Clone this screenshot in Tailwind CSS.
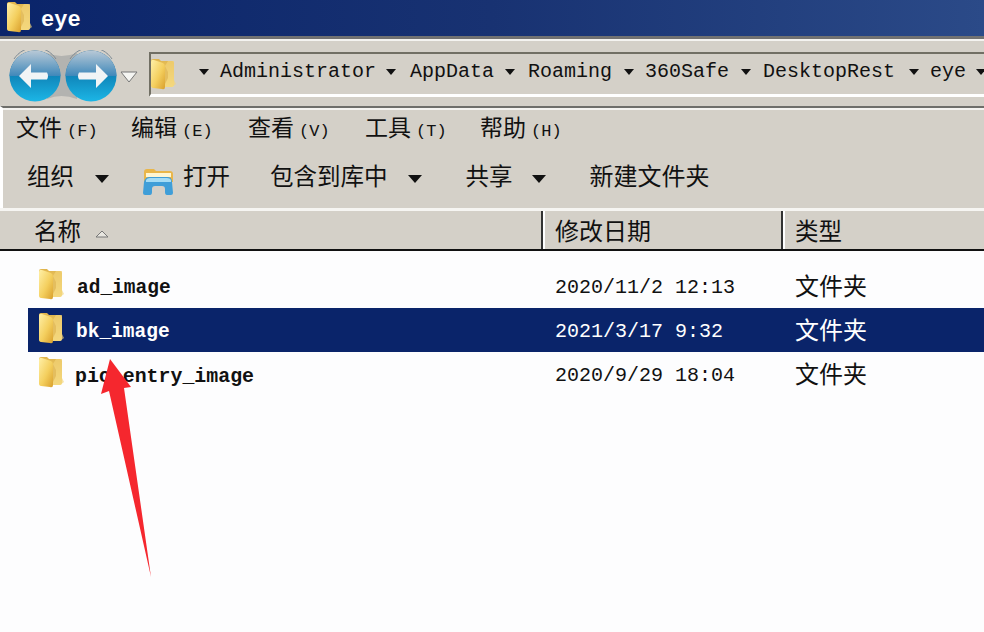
<!DOCTYPE html>
<html lang="en">

<head>
    <meta charset="UTF-8">
    <title>eye</title>
    <script src="https://cdn.jsdelivr.net/npm/@tailwindcss/browser@4"></script>
</head>

<body class="relative w-[984px] h-[632px] overflow-hidden bg-[#fdfdfe] text-[#111] font-['Liberation_Mono','Noto_Sans_CJK_SC',monospace]">
    <svg class="absolute w-0 h-0">
        <defs>
            <linearGradient id="folderFront" x1="0" y1="0" x2="1" y2="1">
                <stop offset="0" stop-color="#fff0a8" />
                <stop offset="0.55" stop-color="#f4cf5e" />
                <stop offset="1" stop-color="#d99f2c" />
            </linearGradient>
            <linearGradient id="folderBack" x1="0" y1="0" x2="0" y2="1">
                <stop offset="0" stop-color="#e0b44c" />
                <stop offset="1" stop-color="#f6df86" />
            </linearGradient>
            <linearGradient id="btnBottom" x1="0" y1="0" x2="0" y2="1">
                <stop offset="0" stop-color="#04568e" />
                <stop offset="1" stop-color="#1cb6e6" />
            </linearGradient>
            <linearGradient id="btnTop" x1="0" y1="0" x2="0" y2="1">
                <stop offset="0" stop-color="#b9c9d6" />
                <stop offset="1" stop-color="#3f88ba" />
            </linearGradient>
            <symbol id="folder" viewBox="0 0 26 32">
                <path d="M1 3 Q1 1 3 1 H9 L11 3 H22 Q24 3 24 5 V27 Q24 29 22 29 H3 Q1 29 1 27 Z" fill="url(#folderBack)" />
                <path d="M1 4 Q1 1 4 2 L13 5 Q15 6 15 9 V29 Q15 32 12 31 L3 30 Q1 30 1 27 Z" fill="url(#folderFront)" />
                <path d="M15 8 L18 14 V20 L15 26 Z" fill="#c9962f" />
                <path d="M18 3 H24 V22 L26 26 L22 29 H15 V8 Z" fill="#f3d479" opacity="0.65" />
            </symbol>
            <symbol id="navBtn" viewBox="0 0 52 52">
                <circle cx="26" cy="26" r="25.5" fill="url(#btnBottom)" />
                <path d="M0.5 26 A25.5 25.5 0 0 1 51.5 26 Z" fill="url(#btnTop)" />
                <path d="M5 9 A25 25 0 0 1 47 9" fill="none" stroke="#7d8a94" stroke-width="1" />
            </symbol>
        </defs>
    </svg>

    <!-- title bar -->
    <header class="h-[36px] flex items-center pl-[6px] gap-[9px] bg-gradient-to-r from-[#0a246a] via-[#183272] to-[#2b4a88]">
        <svg class="w-[26px] h-[32px] -mt-[2px]"><use href="#folder" /></svg>
        <span class="text-white font-bold text-[22px] leading-none mt-[6px]">eye</span>
    </header>

    <!-- address bar -->
    <div class="h-[70px] border-t-[3px] border-[#727272] bg-[#d4d0c8] shadow-[inset_0_2px_0_#f4f3f0] flex pl-[9px]">
        <div class="flex items-center gap-[4px] w-[140px] mt-[7px] shrink-0">
            <svg class="w-[52px] h-[52px] overflow-visible" viewBox="0 0 52 52">
                <path d="M38 3 Q52 9 68 3 V49 Q52 43 38 49 Z" fill="#b3b3b0" />
                <use href="#navBtn" width="52" height="52" />
                <path d="M10 26 L22 14 V22.5 H38 Q40 26 38 29.5 H22 V38 Z" fill="#f1f4f6" />
            </svg>
            <svg class="w-[52px] h-[52px]" viewBox="0 0 52 52">
                <use href="#navBtn" width="52" height="52" />
                <path d="M43 26 L31 14 V22.5 H14 Q12 26 14 29.5 H31 V38 Z" fill="#f1f4f6" />
            </svg>
            <svg class="w-[18px] h-[12px] -ml-[1px] mt-[2px]" viewBox="0 0 18 12">
                <path d="M1 1 H17 L9 11 Z" fill="#f5f5f2" stroke="#777" stroke-width="1" />
            </svg>
        </div>
        <div class="mt-[13px] h-[45px] flex-1 border-t-2 border-l-2 border-[#716f64] border-b-[3px] border-b-white flex items-center overflow-hidden min-w-0">
            <svg class="w-[26px] h-[32px] -ml-[1px] shrink-0"><use href="#folder" /></svg>
            <div class="-mt-[4px] flex items-center text-[20px] leading-none whitespace-nowrap ml-[23px]">
                <span class="w-0 h-0 border-x-[5px] border-x-transparent border-t-[6px] border-t-[#111] mr-[11px]"></span>
                <span>Administrator</span>
                <span class="w-0 h-0 border-x-[5px] border-x-transparent border-t-[6px] border-t-[#111] ml-[10px] mr-[14px]"></span>
                <span>AppData</span>
                <span class="w-0 h-0 border-x-[5px] border-x-transparent border-t-[6px] border-t-[#111] ml-[11px] mr-[13px]"></span>
                <span>Roaming</span>
                <span class="w-0 h-0 border-x-[5px] border-x-transparent border-t-[6px] border-t-[#111] ml-[12px] mr-[11px]"></span>
                <span>360Safe</span>
                <span class="w-0 h-0 border-x-[5px] border-x-transparent border-t-[6px] border-t-[#111] ml-[12px] mr-[12px]"></span>
                <span>DesktopRest</span>
                <span class="w-0 h-0 border-x-[5px] border-x-transparent border-t-[6px] border-t-[#111] ml-[14px] mr-[11px]"></span>
                <span>eye</span>
                <span class="w-0 h-0 border-x-[5px] border-x-transparent border-t-[6px] border-t-[#111] ml-[10px]"></span>
            </div>
        </div>
    </div>

    <!-- menu and command bar -->
    <div class="h-[102px] border-t-2 border-[#6e6e6a] border-l-[3px] border-l-white bg-[#d4d0c8] shadow-[inset_0_2px_0_#f4f3f0]">
        <nav class="h-[40px] pt-[5px] pl-[13px] flex items-center gap-[33px] text-[23px] whitespace-nowrap">
            <span class="flex items-baseline w-[82px]">文件<span class="text-[17px] ml-[5px]">(F)</span></span>
            <span class="flex items-baseline w-[84px]">编辑<span class="text-[17px] ml-[5px]">(E)</span></span>
            <span class="flex items-baseline w-[84px]">查看<span class="text-[17px] ml-[5px]">(V)</span></span>
            <span class="flex items-baseline w-[82px]">工具<span class="text-[17px] ml-[5px]">(T)</span></span>
            <span class="flex items-baseline w-[84px]">帮助<span class="text-[17px] ml-[5px]">(H)</span></span>
        </nav>
        <div class="h-[58px] pl-[24px] pt-[4px] flex items-center text-[23.5px] whitespace-nowrap">
            <span>组织</span>
            <span class="w-0 h-0 border-x-[7px] border-x-transparent border-t-[8px] border-t-[#111] ml-[21px]"></span>
            <svg class="w-[32px] h-[28px] ml-[33px] mt-[3px]" viewBox="0 0 32 28">
                <path d="M2 15 V5 Q2 2 5 2 H12 L14 4 H28 Q31 4 31 7 V15 Z" fill="#e9b64a" />
                <path d="M4 6 H29 V10 H4 Z" fill="#fff6d2" />
                <path d="M1 26 L2 15 Q3 10 8 10 H25 Q30 10 30 15 L31 26 Q31 28 29 28 H25 Q23 28 23 25 V22 Q23 19 20 19 H13 Q10 19 10 22 V25 Q10 28 8 28 H3 Q1 28 1 26 Z" fill="#3f9ed8" />
                <path d="M4 13 Q5 11 8 11 H25 Q28 11 29 13 V15 H4 Z" fill="#a4dcf5" />
            </svg>
            <span class="ml-[9px]">打开</span>
            <span class="ml-[40px]">包含到库中</span>
            <span class="w-0 h-0 border-x-[7px] border-x-transparent border-t-[8px] border-t-[#111] ml-[20px]"></span>
            <span class="ml-[44px]">共享</span>
            <span class="w-0 h-0 border-x-[7px] border-x-transparent border-t-[8px] border-t-[#111] ml-[19px]"></span>
            <span class="ml-[44px] text-[24px]">新建文件夹</span>
        </div>
    </div>

    <!-- column headers -->
    <div class="h-[43px] flex bg-[#d4d0c8] border-t-[3px] border-t-[#f6f5f2] border-b-2 border-b-[#111] text-[23.5px] leading-none">
        <div class="w-[543px] pl-[34px] pt-[7px] flex items-center gap-[14px] border-r-2 border-r-[#333]">
            <span>名称</span>
            <svg class="w-[14px] h-[8px]" viewBox="0 0 14 8">
                <path d="M1 7 L7 1 L13 7 Z" fill="#e8e6e0" stroke="#777" stroke-width="1" />
            </svg>
        </div>
        <div class="w-[240px] pl-[10px] pt-[7px] text-[24px] flex items-center border-l-2 border-l-white border-r-2 border-r-[#333]">修改日期</div>
        <div class="pl-[10px] pt-[7px] flex items-center border-l-2 border-l-white">类型</div>
    </div>

    <!-- file list -->
    <main class="pt-[13px] pl-[28px] text-[20px] leading-none">
        <div class="h-[44px] flex items-center">
            <div class="w-[515px] flex items-center">
                <svg class="w-[26px] h-[32px] ml-[10px] -mt-[4px]"><use href="#folder" /></svg>
                <span class="ml-[13px] mt-[6px] font-bold text-[19.5px]">ad_image</span>
            </div>
            <span class="w-[240px] pl-[12px] mt-[4px]">2020/11/2 12:13</span>
            <span class="pl-[12px] mt-[5px] text-[24px]">文件夹</span>
        </div>
        <div class="h-[44px] flex items-center bg-[#0a246a] text-white">
            <div class="w-[515px] flex items-center">
                <svg class="w-[26px] h-[32px] ml-[10px] -mt-[4px]"><use href="#folder" /></svg>
                <span class="ml-[12px] mt-[6px] font-bold text-[19.5px]">bk_image</span>
            </div>
            <span class="w-[240px] pl-[12px] mt-[4px]">2021/3/17 9:32</span>
            <span class="pl-[12px] mt-[5px] text-[24px]">文件夹</span>
        </div>
        <div class="h-[44px] flex items-center">
            <div class="w-[515px] flex items-center">
                <svg class="w-[26px] h-[32px] ml-[10px] -mt-[4px]"><use href="#folder" /></svg>
                <span class="ml-[11px] mt-[6px] font-bold text-[19.9px]">pic_entry_image</span>
            </div>
            <span class="w-[240px] pl-[12px] mt-[4px]">2020/9/29 18:04</span>
            <span class="pl-[12px] mt-[5px] text-[24px]">文件夹</span>
        </div>
    </main>

    <!-- red annotation arrow drawn over the list -->
    <svg class="absolute left-0 top-0 w-[984px] h-[632px] pointer-events-none" viewBox="0 0 984 632">
        <path d="M110 359 L131 387 L124 388 L151 577 L109 391 L101 394 Z" fill="#f5272e" />
    </svg>
</body>

</html>
